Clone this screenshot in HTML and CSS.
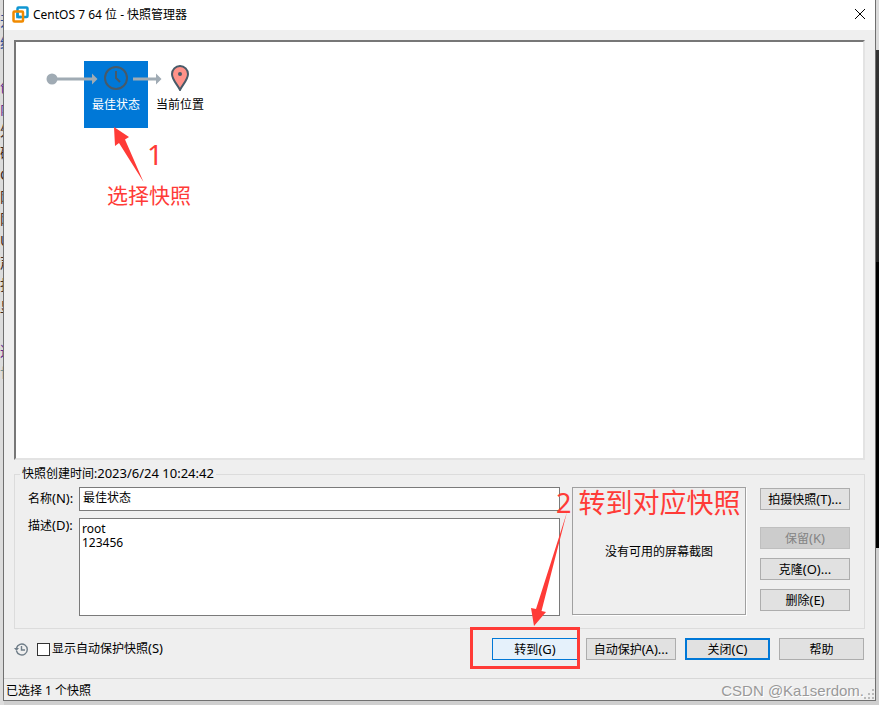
FILE: index.html
```html
<!DOCTYPE html>
<html lang="zh-CN">
<head>
    <meta charset="UTF-8">
    <title>CentOS 7 64 位 - 快照管理器</title>
    <link rel="stylesheet" href="styles.css">
</head>
<body>
    <div class="behind" aria-hidden="true">
        <p class="navy">开<br>给</p>
        <p class="purple">创<br>内</p>
        <p>外<br>硬<br>C<br>网<br>网<br>U<br>声<br>打<br>显</p>
        <p class="purple">这</p>
        <p class="grey">世</p>
    </div>

    <div class="window">
        <header class="titlebar">
            <svg width="17" height="17" viewBox="0 0 17 17" fill="none" stroke-width="2.500">
                <rect x="5.500" y="1.500" width="10" height="9.500" rx="1" stroke="#0f96d2"/>
                <rect x="1.500" y="5.500" width="9.500" height="10" rx="1" stroke="#f08a00"/>
                <path d="M5.500 7V11H9" stroke="#0f96d2"/>
            </svg>
            <h1>CentOS 7 64 位 - 快照管理器</h1>
            <button class="close" aria-label="关闭窗口">
                <svg width="12" height="12" viewBox="0 0 12 12" stroke="#000"><path d="M1 1L11 11M11 1L1 11"/></svg>
            </button>
        </header>

        <main>
            <section class="canvas">
                <div class="node node-snapshot selected">
                    <svg width="26" height="26" viewBox="0 0 26 26" fill="none" stroke="#485a68" stroke-width="2">
                        <circle cx="13" cy="13" r="11"/>
                        <path d="M13 6V13L17 17"/>
                    </svg>
                    <span>最佳状态</span>
                </div>
                <div class="node node-current">
                    <svg width="26" height="26" viewBox="0 0 26 26">
                        <path d="M13 25C11 20 5 15 5 9A8 8 0 0 1 21 9C21 15 15 20 13 25Z" fill="#ff9289" stroke="#485a68" stroke-width="2"/>
                        <circle cx="13" cy="9" r="2" fill="#485a68"/>
                    </svg>
                    <span>当前位置</span>
                </div>
                <svg class="links" width="150" height="14" viewBox="0 0 150 14" fill="#a0abb4">
                    <circle cx="6" cy="7" r="5.500"/>
                    <path d="M10 5.500H46V1.500L51.500 7L46 12.500V8.500H10Z"/>
                    <path d="M87 5.500H110V1.500L115.500 7L110 12.500V8.500H87Z"/>
                </svg>
                <svg class="mark arrow-one" width="32" height="58" viewBox="0 0 32 58" fill="#ff3b37"><path d="M1 1L16 11L12 13.500L30.500 56L6 17L2 20Z"/></svg>
                <span class="mark mark-one">1</span>
                <span class="mark mark-select">选择快照</span>
            </section>

            <fieldset class="details">
                <legend>快照创建时间:<span class="latin">2023/6/24 10:24:42</span></legend>
                <div class="fields">
                    <label for="name">名称<span class="latin">(N):</span></label>
                    <input type="text" id="name" value="最佳状态">
                    <label for="desc">描述<span class="latin">(D):</span></label>
                    <textarea id="desc">root
123456</textarea>
                </div>
                <div class="preview">没有可用的屏幕截图</div>
                <div class="side">
                    <button>拍摄快照<span class="latin">(T)...</span></button>
                    <button disabled>保留<span class="latin">(K)</span></button>
                    <button>克隆<span class="latin">(O)...</span></button>
                    <button>删除<span class="latin">(E)</span></button>
                </div>
            </fieldset>

            <div class="actions">
                <svg width="15" height="15" viewBox="0 0 15 15" fill="none" stroke="#6f7d88">
                    <path d="M2.500 9A5.500 5.500 0 1 0 2.500 6M7.500 4V8H11" stroke-width="1.400"/>
                    <path d="M0 6H5L2.500 9Z" fill="#6f7d88" stroke="none"/>
                </svg>
                <input type="checkbox" id="auto">
                <label for="auto">显示自动保护快照<span class="latin">(S)</span></label>
                <div class="goto">
                    <button class="hot">转到<span class="latin">(G)</span></button>
                    <span class="mark box"></span>
                    <svg class="mark arrow-two" width="40" height="116" viewBox="0 0 40 116" fill="#ff3b37"><path d="M38 1L12.500 100L17 101L5 115L2 97L7 98Z"/></svg>
                    <span class="mark mark-two">2 转到对应快照</span>
                </div>
                <button class="wide">自动保护<span class="latin">(A)...</span></button>
                <button class="default">关闭<span class="latin">(C)</span></button>
                <button>帮助</button>
            </div>
        </main>

        <footer class="status">
            <span>已选择 1 个快照</span>
            <span class="watermark">CSDN @Ka1serdom.</span>
            <svg class="grip" width="11" height="11" viewBox="0 0 11 11" fill="#bababa">
                <path d="M8 0h2v2h-2zM8 4h2v2h-2zM8 8h2v2h-2zM4 4h2v2h-2zM4 8h2v2h-2zM0 8h2v2h-2z"/>
            </svg>
        </footer>
    </div>
</body>
</html>
```
FILE: styles.css
```css
* {
    box-sizing: border-box;
}
body {
    margin: 0;
    min-height: 100vh;
    display: flex;
    position: relative;
    padding: 0 3px 4px;
    background: linear-gradient(#dcdcdc 50px, #333 50px, #222 262px, #000 262px, #000 548px, #cfcfcf 548px);
    font: 12px/16px "Noto Sans", "Noto Sans CJK SC", sans-serif;
    color: #000;
}
button, input, textarea {
    font: inherit;
    color: inherit;
    border-radius: 0;
}
.latin {
    font-size: 13px;
    line-height: 14px;
}

/* page showing behind the window */
.behind {
    position: absolute;
    left: 0;
    top: 0;
    bottom: 0;
    width: 4px;
    padding-top: 10px;
    overflow: hidden;
    background: #dcdcdc;
    font-size: 14px;
    line-height: 22px;
    color: #402a1c;
}
.behind p {
    width: 20px;
    margin: 0 0 22px;
}
.behind .navy {
    color: #2b4c9b;
}
.behind .purple {
    margin-bottom: 0;
    color: #63278f;
}
.behind .grey {
    color: #6f9090;
}

.window {
    flex: 1;
    display: flex;
    flex-direction: column;
    position: relative;
    border: 1px solid #707070;
    border-top: 0;
    background: #efefef;
}
.titlebar {
    display: flex;
    align-items: center;
    height: 30px;
    padding: 0 7px 0 8px;
    background: #fff;
}
.titlebar svg {
    margin-bottom: 1px;
}
.titlebar h1 {
    flex: 1;
    margin: 0 0 0 4px;
    font-size: 12px;
    font-weight: 400;
}
.close {
    display: flex;
    padding: 0 2px 1px;
    border: 0;
    background: none;
}
main {
    flex: 1;
    display: flex;
    flex-direction: column;
    padding: 10px 10px 18px;
}

.canvas {
    flex: 1;
    min-height: 200px;
    position: relative;
    border: 2px solid;
    border-color: #777 #e3e3e3 #e3e3e3 #777;
    background: #fff;
}
.node {
    position: absolute;
    top: 19px;
    width: 64px;
    height: 67px;
    padding-top: 4px;
    display: flex;
    flex-direction: column;
    align-items: center;
    gap: 6px;
}
.node-snapshot {
    left: 68px;
}
.node-current {
    left: 132px;
}
.selected {
    background: #0078d7;
    color: #fff;
}
.links {
    position: absolute;
    left: 30px;
    top: 30px;
}

/* red pen marks */
.mark {
    position: absolute;
    color: #ff3b37;
    white-space: nowrap;
    pointer-events: none;
}
.arrow-one {
    left: 97px;
    top: 84px;
}
.mark-one {
    left: 131px;
    top: 96px;
    font-size: 28px;
    line-height: 32px;
}
.mark-select {
    left: 91px;
    top: 137px;
    font-size: 21px;
    line-height: 32px;
}
.box {
    left: -22px;
    top: -11px;
    width: 110px;
    height: 42px;
    border: 3px solid #ff3b37;
}
.arrow-two {
    left: 37px;
    top: -127px;
}
.mark-two {
    left: 64px;
    top: -151px;
    font-size: 27px;
    line-height: 32px;
}

.details {
    display: flex;
    gap: 12px;
    min-width: 0;
    margin: 6px 0 9px;
    padding: 5px 14px 12px 13px;
    border: 1px solid #dcdcdc;
}
.details legend {
    margin-left: -8px;
    padding: 0 2px;
}
.fields {
    flex: 1;
    display: grid;
    grid-template-columns: 46px 1fr;
    grid-template-rows: 24px 98px;
    gap: 7px 5px;
}
.fields label {
    padding-top: 4px;
    white-space: nowrap;
}
.fields input + label {
    padding-top: 0;
}
.fields input, .fields textarea {
    min-width: 0;
    width: 100%;
    margin: 0;
    border: 1px solid #7a7a7a;
    background: #fff;
    outline: 0;
}
.fields input {
    padding: 0 3px 3px;
}
.fields textarea {
    padding: 3px 2px;
    line-height: 14px;
    resize: none;
}
.preview {
    width: 174px;
    height: 128px;
    padding-top: 2px;
    display: flex;
    align-items: center;
    justify-content: center;
    border: 1px solid #a0a0a0;
    box-shadow: 1px 1px 0 #fff;
}
.side {
    width: 90px;
    margin-left: 2px;
    padding-top: 1px;
    display: flex;
    flex-direction: column;
    gap: 9px;
}
.side button:first-child {
    margin-bottom: 8px;
}
.side button, .actions button {
    height: 22px;
    padding: 2px 0 0;
    border: 1px solid #adadad;
    background: #e1e1e1;
    white-space: nowrap;
}
.side button:disabled {
    border-color: #bfbfbf;
    background: #ccc;
    color: #838383;
}

.actions {
    display: flex;
    align-items: center;
    gap: 9px;
    padding-right: 1px;
}
.actions input {
    appearance: none;
    width: 13px;
    height: 13px;
    margin: 0 -7px 0 -1px;
    border: 1px solid #333;
    background: #fff;
}
.actions button {
    width: 85px;
}
.actions .wide {
    width: 90px;
}
.actions .hot {
    display: block;
    width: 86px;
    border-color: #0078d7;
    background: #e5f1fb;
}
.actions .default {
    border: 2px solid #0078d7;
}
.goto {
    position: relative;
    margin: 0 -1px 0 auto;
}

.status {
    display: flex;
    align-items: center;
    height: 22px;
    padding: 2px 0 0 2px;
    border-top: 1px solid #d7d7d7;
}
.watermark {
    margin-left: auto;
    font-family: "Liberation Sans", sans-serif;
    font-size: 15px;
    color: #999;
    text-shadow: 1px 1px 0 #fff;
}
.grip {
    align-self: flex-end;
}
```
